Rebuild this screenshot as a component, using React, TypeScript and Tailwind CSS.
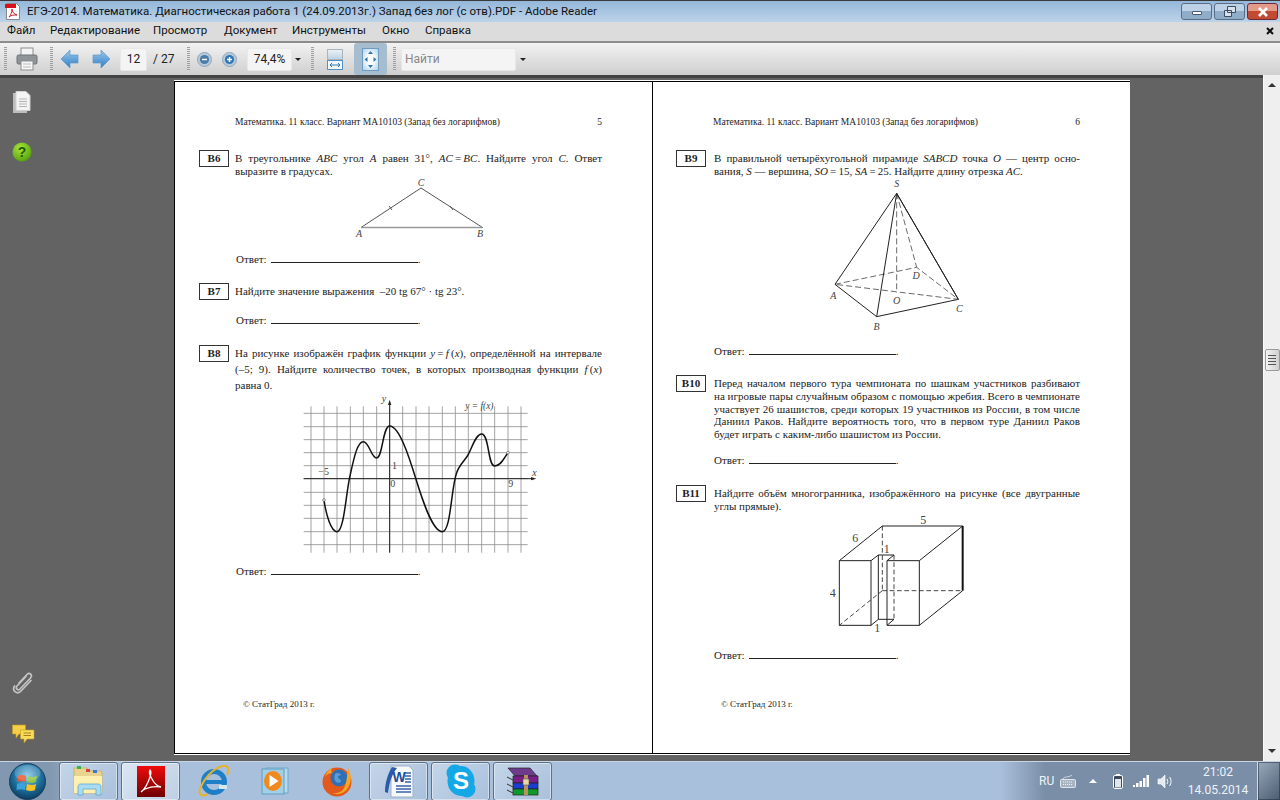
import { ReactNode } from 'react'

const title = 'ЕГЭ-2014. Математика. Диагностическая работа 1 (24.09.2013г.) Запад без лог (с отв).PDF - Adobe Reader'

const menu = [
  { label: 'Файл', width: 'w-[43px]' },
  { label: 'Редактирование', width: 'w-[103px]' },
  { label: 'Просмотр', width: 'w-[71px]' },
  { label: 'Документ', width: 'w-[68px]' },
  { label: 'Инструменты', width: 'w-[90px]' },
  { label: 'Окно', width: 'w-[43px]' },
  { label: 'Справка', width: 'w-[60px]' },
]

function Gripper({ className = '' }: { className?: string }) {
  return (
    <div
      className={`h-[24px] w-[3px] shrink-0 bg-[repeating-linear-gradient(to_bottom,#a0a0a0_0,#a0a0a0_1px,transparent_1px,transparent_2px)] ${className}`}
    />
  )
}

function PdfIcon() {
  return (
    <svg width="16" height="17" viewBox="0 0 16 17" className="shrink-0">
      <path d="M1.5 .5h10l3 3v13h-13z" fill="#fff" stroke="#8a8a8a" />
      <rect x="0" y="1" width="11" height="4" fill="#d8111a" />
      <path d="M4 14c2-2 3-5 3-8 0 3 2 5 5 6-3 0-6 0-8 2z" fill="none" stroke="#c8202a" strokeWidth="1" />
    </svg>
  )
}

function Printer() {
  return (
    <svg width="22" height="24" viewBox="0 0 22 24" className="ml-[9px] shrink-0">
      <rect x="5" y="1" width="12" height="8" fill="#f4f4f4" stroke="#8d8d8d" />
      <rect x="1" y="8" width="20" height="9" rx="1.5" fill="#8f9499" stroke="#6e7276" />
      <rect x="5" y="14" width="12" height="9" fill="#f8f8f8" stroke="#8d8d8d" />
      <path d="M7 17h8M7 20h8" stroke="#b8b8b8" />
    </svg>
  )
}

function ArrowIcon({ dir, className }: { dir: 'left' | 'right'; className: string }) {
  const d = dir === 'left' ? 'M1 10 10 1v5h8v8h-8v5z' : 'M18 10 9 1v5H1v8h8v5z'
  return (
    <svg width="19" height="20" viewBox="0 0 19 20" className={`shrink-0 ${className}`}>
      <defs>
        <linearGradient id={`arrow-${dir}`} x1="0" y1="0" x2="0" y2="1">
          <stop offset="0" stopColor="#9cc8ee" />
          <stop offset="1" stopColor="#2f7fc4" />
        </linearGradient>
      </defs>
      <path d={d} fill={`url(#arrow-${dir})`} stroke="#5d9ac9" strokeWidth=".7" />
    </svg>
  )
}

function ZoomIcon({ plus, className }: { plus?: boolean; className: string }) {
  return (
    <svg width="15" height="15" viewBox="0 0 15 15" className={`shrink-0 ${className}`}>
      <circle cx="7.5" cy="7.5" r="7" fill="#b9c9d9" stroke="#8ea6bc" />
      <circle cx="7.5" cy="7.5" r="4.6" fill={plus ? '#2f78b8' : '#4a7ca8'} />
      <path d={plus ? 'M5 7.5h5M7.5 5v5' : 'M5 7.5h5'} stroke="#fff" strokeWidth="1.5" />
    </svg>
  )
}

function DropArrow({ className }: { className: string }) {
  return <div className={`h-0 w-0 shrink-0 border-x-[3px] border-t-[3px] border-x-transparent border-t-[#222] ${className}`} />
}

function FieldBox({ className, children }: { className: string; children: ReactNode }) {
  return (
    <div className={`flex h-[23px] shrink-0 items-center rounded-[2px] border border-[#e8e8e8] bg-[#f4f4f4] ${className}`}>
      {children}
    </div>
  )
}

function FitWidthIcon() {
  return (
    <svg width="16" height="21" viewBox="0 0 16 21" className="ml-[13px] shrink-0">
      <defs>
        <linearGradient id="fit-width" x1="0" y1="0" x2="0" y2="1">
          <stop offset="0" stopColor="#eef1f4" />
          <stop offset="1" stopColor="#bcd2e4" />
        </linearGradient>
      </defs>
      <rect x=".5" y=".5" width="15" height="10" fill="url(#fit-width)" stroke="#a8b4be" />
      <rect x=".5" y="11.5" width="15" height="9" fill="#f4f9fd" stroke="#4f93c8" />
      <path d="M3 16h10M3 16l2-2M3 16l2 2M13 16l-2-2M13 16l-2 2" stroke="#2f78b0" fill="none" />
    </svg>
  )
}

function FitPageIcon() {
  return (
    <svg width="17" height="23" viewBox="0 0 17 23">
      <defs>
        <radialGradient id="fit-page" cx=".5" cy=".5" r=".7">
          <stop offset=".3" stopColor="#ffffff" />
          <stop offset="1" stopColor="#a5d0ee" />
        </radialGradient>
      </defs>
      <rect x=".5" y=".5" width="16" height="22" fill="url(#fit-page)" stroke="#6f9cc0" />
      <path d="M8.500 3 6 6h5zM8.500 20 6 17h5zM2.500 11.500 5.500 9v5zM14.500 11.500 11.500 9v5z" fill="#2f78b0" />
    </svg>
  )
}

function DocRailIcon() {
  return (
    <svg width="18" height="22" viewBox="0 0 18 22">
      <rect x="0" y="2" width="14" height="20" fill="#bdbdbd" />
      <path d="M3 .5h10l4 4v15H3z" fill="#f4f4f4" stroke="#d0d0d0" />
      <path d="M6 8h8M6 10.500h8M6 13h8M6 15.500h8" stroke="#b4b4b4" />
    </svg>
  )
}

function HelpRailIcon() {
  return (
    <svg width="20" height="20" viewBox="0 0 20 20">
      <defs>
        <radialGradient id="help-green" cx=".4" cy=".3" r=".8">
          <stop offset="0" stopColor="#a8e63a" />
          <stop offset="1" stopColor="#4c9a08" />
        </radialGradient>
      </defs>
      <circle cx="10" cy="10" r="9.500" fill="url(#help-green)" />
      <text x="10" y="15" textAnchor="middle" fontSize="14" fontWeight="700" fontFamily="Liberation Sans, sans-serif" fill="#1f5a08">
        ?
      </text>
    </svg>
  )
}

function ClipRailIcon() {
  return (
    <svg width="22" height="24" viewBox="0 0 22 24">
      <path
        d="M7 12 15 3.500c2.500-2.500 6 .5 3.500 3.500L8 18c-2 2-5-.5-3-3l9-9.500M2.500 15c-3 5 3 9 6.500 5L19 9.500"
        fill="none"
        stroke="#c4c4c4"
        strokeWidth="1.700"
        strokeLinecap="round"
      />
    </svg>
  )
}

function ChatRailIcon() {
  return (
    <svg width="24" height="20" viewBox="0 0 24 20">
      <path d="M1.500 1h13v9H8l-3 4v-4H1.500z" fill="#f5cf45" stroke="#c79a1c" strokeWidth=".6" />
      <path d="M9.500 6h13.500v9h-7l-3 4v-4H9.500z" fill="#f8dc5e" stroke="#c79a1c" strokeWidth=".6" />
      <path d="M12.500 9h7.500M12.500 11.500h7.500" stroke="#a87c12" />
    </svg>
  )
}

function WinButton({ className, children }: { className: string; children: ReactNode }) {
  return (
    <div className={`flex h-[17px] w-[31px] items-center justify-center rounded-[3px] border border-[#5b6d84] ${className}`}>
      {children}
    </div>
  )
}

/* ---- document page ---- */

function Row({ className = '', children }: { className?: string; children: ReactNode }) {
  return <p className={`whitespace-nowrap text-justify [text-align-last:justify] ${className}`}>{children}</p>
}

function Plain({ className = '', children }: { className?: string; children: ReactNode }) {
  return <p className={`whitespace-nowrap ${className}`}>{children}</p>
}

function M({ children }: { children: ReactNode }) {
  return <i>{children}</i>
}

function Task({ label, gap, children }: { label: string; gap: string; children: ReactNode }) {
  return (
    <div className={`flex items-start ${gap}`}>
      <div className="-mt-[2px] flex h-[17px] w-[30px] shrink-0 items-center justify-center border border-[#333] text-[11px] font-bold leading-none">
        {label}
      </div>
      <div className="min-w-0 flex-1 pr-[50px]">{children}</div>
    </div>
  )
}

function Answer({ className }: { className: string }) {
  return (
    <div className={`flex h-[13px] items-baseline ${className}`}>
      <span>Ответ:</span>
      <span className="ml-[4px] h-[9px] w-[147px] border-b border-[#222]" />
      <span>.</span>
    </div>
  )
}

function PageHead({ page, left }: { page: string; left: string }) {
  return (
    <div className={`flex h-[13px] justify-between pr-[50px] text-[9.5px] ${left}`}>
      <span>Математика. 11 класс. Вариант МА10103 (Запад без логарифмов)</span>
      <span>{page}</span>
    </div>
  )
}

function TriangleFigure() {
  return (
    <svg width="140" height="75" viewBox="350 178 140 75" className="ml-[152px] block">
      <path d="M360 227.500 420 188l61.500 39.500z" fill="none" stroke="#555" strokeWidth="1" />
      <path d="M360 227.500h121" stroke="#999" strokeWidth="1.300" />
      <path d="M388 206l3 4M449 206l3 4" stroke="#555" />
      <g fontFamily="Liberation Serif, serif" fontStyle="italic" fontSize="10" fill="#444" textAnchor="middle">
        <text x="420" y="186">C</text>
        <text x="358" y="237">A</text>
        <text x="479" y="237">B</text>
      </g>
    </svg>
  )
}

const gridX = [60, 99, 138, 178, 217, 257, 296, 335, 375, 414, 454, 493, 532, 572, 611, 651, 690]
const gridY = [217, 257, 296, 335, 374, 413, 454, 493, 532, 572, 611]

function GraphFigure() {
  return (
    <svg width="260" height="162" viewBox="0 159 780 486" className="ml-[92px] mt-[2px] block">
      {gridX.map((x) => (
        <path key={x} d={`M${x} 196V635`} stroke="#8c8c8c" strokeWidth="2.400" />
      ))}
      {gridY.map((y) => (
        <path key={y} d={`M38 ${y}H710`} stroke="#8c8c8c" strokeWidth="2.400" />
      ))}
      <path d="M38 413H728M296 635V185" stroke="#222" strokeWidth="3" />
      <path d="M736 413l-16-5v10zM296 176l-5 16h10z" fill="#222" />
      <path
        d="M99 477C105 520 120 572 138 572C160 572 165 450 178 400C190 345 200 302 217 302C235 302 240 351 257 351C275 351 275 255 296 255C325 255 355 350 375 415C395 480 425 572 454 572C480 572 480 440 497 395C505 370 525 355 532 340C545 315 555 279 572 279C595 279 590 375 611 375C630 375 640 350 651 335"
        fill="none"
        stroke="#111"
        strokeWidth="4.500"
      />
      <circle cx="99" cy="477" r="4" fill="#fff" stroke="#555" strokeWidth="2" />
      <circle cx="651" cy="335" r="4" fill="#fff" stroke="#555" strokeWidth="2" />
      <g fontFamily="Liberation Serif, serif" fontSize="30" fill="#444">
        <text x="272" y="182" fontStyle="italic">y</text>
        <text x="523" y="204" fontStyle="italic" fontSize="28">y = f(x)</text>
        <text x="724" y="404" fontStyle="italic">x</text>
        <text x="82" y="403">−5</text>
        <text x="303" y="384">1</text>
        <text x="298" y="438">0</text>
        <text x="652" y="438">9</text>
      </g>
    </svg>
  )
}

function PyramidFigure() {
  return (
    <svg width="150" height="160" viewBox="450 114 450 480" className="ml-[144px] block">
      <path d="M680 160 495 433l125 97 245-52zM680 160l-60 370M680 160l185 318" fill="none" stroke="#222" strokeWidth="3" />
      <path d="M495 433 740 382 865 478 495 433M680 160V458M680 160l60 222" fill="none" stroke="#333" strokeWidth="2.200" strokeDasharray="18 9" />
      <g fontFamily="Liberation Serif, serif" fontStyle="italic" fontSize="30" fill="#444" textAnchor="middle">
        <text x="680" y="140">S</text>
        <text x="490" y="476">A</text>
        <text x="620" y="570">B</text>
        <text x="868" y="516">C</text>
        <text x="738" y="416">D</text>
        <text x="680" y="491">O</text>
      </g>
    </svg>
  )
}

function PolyhedronFigure() {
  return (
    <svg width="140" height="125" viewBox="480 429 420 375" className="ml-[154px] block">
      <g fill="none" stroke="#222" strokeWidth="3">
        <path d="M603 572H508V766H603V572L625 555V748L603 766" />
        <path d="M625 555H672L651 572V766H748V572H651M748 572 878 468H637L508 572M748 766 878 662" />
        <path d="M625 748H672L651 766" />
      </g>
      <path d="M878 468V662" stroke="#111" strokeWidth="6" />
      <path d="M637 468V662M637 662H878M637 662 508 766M672 555V748" fill="none" stroke="#222" strokeWidth="2.500" strokeDasharray="14 8" />
      <g fontFamily="Liberation Serif, serif" fontSize="36" fill="#444" textAnchor="middle">
        <text x="760" y="462">5</text>
        <text x="556" y="516">6</text>
        <text x="650" y="548">1</text>
        <text x="488" y="682">4</text>
        <text x="622" y="786">1</text>
      </g>
    </svg>
  )
}

/* ---- taskbar icons ---- */

function StartOrb() {
  return (
    <svg width="37" height="37" viewBox="0 0 37 37">
      <defs>
        <radialGradient id="orb" cx=".5" cy=".35" r=".7">
          <stop offset="0" stopColor="#7fc5e8" />
          <stop offset=".55" stopColor="#1c6f9f" />
          <stop offset="1" stopColor="#0a3352" />
        </radialGradient>
      </defs>
      <circle cx="18.500" cy="18.500" r="18" fill="url(#orb)" stroke="#1c3f5c" />
      <path d="M9 13c3-1.500 6-1 8 0v6c-2-1-5-1.500-9 0z" fill="#e8552b" />
      <path d="M19 13c2 1 5 1.500 9 0l-1 6c-3 1.500-6 1-9 0z" fill="#8cc63f" />
      <path d="M8 21c3-1.500 6-1 8.500 0l-.5 6c-3-1-5-1-8.500 0z" fill="#39a3dc" />
      <path d="M18 21c3 1 6 1.500 9 0l-1 6c-3 1.500-6 1-9 0z" fill="#f7c325" />
      <ellipse cx="18.500" cy="10" rx="13" ry="8" fill="#fff" opacity=".18" />
    </svg>
  )
}

function FolderIcon() {
  return (
    <svg width="32" height="32" viewBox="0 0 32 32">
      <path d="M1 3h13l2 3h13v22H1z" fill="#e8d48e" stroke="#c8b56e" />
      <rect x="4" y="1" width="4" height="3" fill="#36b34a" />
      <rect x="13" y="4" width="4" height="3" fill="#d8403a" />
      <rect x="20" y="5" width="4" height="3" fill="#3a78d8" />
      <path d="M1 11h28v17H1z" fill="#fdf0b0" />
      <path d="M5 30v-8c0-2 1-3 3-3h17c2 0 3 1 3 3v8h-5v-6H10v6z" fill="#a9dcf2" stroke="#5fa6cf" strokeWidth=".8" />
    </svg>
  )
}

function AdobeIcon() {
  return (
    <svg width="28" height="31" viewBox="0 0 28 31">
      <defs>
        <linearGradient id="adobe" x1="0" y1="0" x2="0" y2="1">
          <stop offset="0" stopColor="#f00a0a" />
          <stop offset="1" stopColor="#6e0000" />
        </linearGradient>
      </defs>
      <rect width="28" height="31" fill="url(#adobe)" />
      <path d="M4 26c4-3 7-9 9-15 1-3 1-6 0-7-1 2 0 6 2 9 2 4 5 7 9 8-5-1-11 0-16 2-2 1-3 2-4 3z" fill="none" stroke="#fff" strokeWidth="1.300" />
    </svg>
  )
}

function IeIcon() {
  return (
    <svg width="32" height="34" viewBox="0 0 32 34">
      <circle cx="17" cy="18" r="10.500" fill="none" stroke="#1c7fc8" strokeWidth="5" />
      <path d="M7 18h20" stroke="#1c7fc8" strokeWidth="4" />
      <path d="M22 21h8v4h-8z" fill="#d4e8f4" />
      <path d="M29 2c-8-1-20 8-26 23-2 6 2 8 8 5M29 2c2 1 3 4 1 9" fill="none" stroke="#e6b32a" strokeWidth="2" />
    </svg>
  )
}

function PlayerIcon() {
  return (
    <svg width="28" height="28" viewBox="0 0 28 28">
      <rect x="5" y="1" width="22" height="25" fill="#b7d9ec" stroke="#6fa8c8" />
      <rect x="1" y="2" width="22" height="25" fill="#a3cfe6" stroke="#5f9fc4" />
      <ellipse cx="12" cy="14" rx="9" ry="10" fill="#f08a1e" />
      <path d="M8.500 8v12l9-6z" fill="#fff" />
    </svg>
  )
}

function FirefoxIcon() {
  return (
    <svg width="30" height="32" viewBox="0 0 30 32">
      <circle cx="15" cy="17" r="14.500" fill="#e2591c" />
      <circle cx="17" cy="13" r="8.500" fill="#2f6fb5" />
      <path d="M13 9c2-2 5-1 6 1-1 1-3 0-3 2s3 2 3 4-3 2-5 1c-2-2-2-5-1-8z" fill="#5d9ad8" />
      <path d="M26 3c3 5 4 12 1 18-3 7-11 10-17 7 5 1 11-1 13-7 2-5 2-11 3-18z" fill="#f5a623" />
      <path d="M3 12c1-4 3-7 7-9-1 2-1 4 0 5-3 0-5 1-7 4z" fill="#f5a623" />
    </svg>
  )
}

function WordIcon() {
  return (
    <svg width="30" height="33" viewBox="0 0 30 33">
      <path d="M7 1h18l4 4v27H7z" fill="#f6f8fb" stroke="#9eb3c9" />
      <path d="M21 8h6M21 11h6M21 14h6M21 17h6M12 21h15M12 24h15M12 27h15" stroke="#3a62a8" strokeWidth="1.500" />
      <path d="M8 2C4 8 1 18 1 27l3 1C5 18 8 9 13 3z" fill="#2b5ba8" />
      <text x="15" y="17" textAnchor="middle" fontSize="14" fontWeight="700" fontFamily="Liberation Sans, sans-serif" fill="#1f4c96">
        W
      </text>
    </svg>
  )
}

function SkypeIcon() {
  return (
    <svg width="30" height="34" viewBox="0 0 30 34">
      <circle cx="9" cy="9" r="8.500" fill="#14a8e6" />
      <circle cx="21" cy="25" r="8.500" fill="#14a8e6" />
      <ellipse cx="15" cy="17" rx="13.500" ry="15" fill="#14a8e6" />
      <text x="15" y="25" textAnchor="middle" fontSize="24" fontWeight="700" fontFamily="Liberation Sans, sans-serif" fill="#fff">
        S
      </text>
    </svg>
  )
}

function RarIcon() {
  return (
    <svg width="32" height="30" viewBox="0 0 32 30">
      <path d="M1 2h22l7 8H8z" fill="#6e3b8c" stroke="#222" strokeWidth=".7" />
      <rect x="6" y="10" width="25" height="7" fill="#7a1f8a" stroke="#222" strokeWidth=".7" />
      <rect x="6" y="17" width="25" height="6" fill="#1a3fd0" stroke="#222" strokeWidth=".7" />
      <rect x="6" y="23" width="25" height="6" fill="#0d9a2a" stroke="#222" strokeWidth=".7" />
      <path d="M0 11l6 3M0 18l6 3M0 24l6 3" stroke="#333" />
      <rect x="17" y="9" width="4" height="20" fill="#b8935a" />
      <rect x="16" y="13" width="6" height="6" fill="#e8d8a8" stroke="#555" strokeWidth=".6" />
    </svg>
  )
}

function TaskButton({ active, children }: { active?: boolean; children: ReactNode }) {
  return (
    <div
      className={`flex h-[39px] w-[59px] shrink-0 items-center justify-center rounded-[3px] border border-[#5f7186] shadow-[inset_0_0_0_1px_rgba(255,255,255,0.45)] ${
        active ? 'bg-[linear-gradient(135deg,#dbe6f2,#bccfe4)]' : 'bg-[linear-gradient(135deg,#c4d5e8,#a9c0dc)]'
      }`}
    >
      {children}
    </div>
  )
}

function TaskSlot({ children }: { children: ReactNode }) {
  return <div className="flex h-[39px] w-[59px] shrink-0 items-center justify-center">{children}</div>
}

export default function App() {
  return (
    <div className="flex h-screen w-[1280px] flex-col overflow-hidden bg-[#636363] font-['Roboto',sans-serif]">
      {/* title bar */}
      <div className="flex h-[22px] shrink-0 items-center border-t border-[#3a3a3a] bg-[linear-gradient(to_bottom,#95b7da,#bcd3e8)] pl-[5px] pr-[2px]">
        <PdfIcon />
        <span className="ml-[6px] whitespace-nowrap text-[11.5px] leading-none text-[#111]">{title}</span>
        <div className="ml-auto flex gap-[2px]">
          <WinButton className="bg-[linear-gradient(to_bottom,#bdd2e6_50%,#8fadc9_50%)]">
            <div className="mt-[3px] h-[4px] w-[10px] rounded-[1px] border border-[#4a5a6c] bg-white" />
          </WinButton>
          <WinButton className="bg-[linear-gradient(to_bottom,#bdd2e6_50%,#8fadc9_50%)]">
            <svg width="12" height="11" viewBox="0 0 12 11">
              <path d="M3.500.5h8v6h-8zM.5 4.500h7v6h-7z" fill="#d8e2ec" stroke="#3d4c5c" />
            </svg>
          </WinButton>
          <WinButton className="border-[#6b2a36] bg-[linear-gradient(to_bottom,#e39a88_50%,#c04a32_50%)]">
            <svg width="12" height="10" viewBox="0 0 12 10">
              <path d="M2 1l8 8M10 1 2 9" stroke="#fff" strokeWidth="2.600" />
            </svg>
          </WinButton>
        </div>
      </div>

      {/* menu */}
      <div className="flex h-[19px] shrink-0 items-center bg-[#dcdcdc] pb-[2px] pl-[7px] pr-[6px] text-[11.5px] leading-none text-[#111]">
        {menu.map((item) => (
          <span key={item.label} className={item.width}>
            {item.label}
          </span>
        ))}
        <svg width="8" height="8" viewBox="0 0 8 8" className="ml-auto">
          <path d="M1 1l6 6M7 1 1 7" stroke="#111" strokeWidth="2" />
        </svg>
      </div>

      {/* toolbar */}
      <div className="flex h-[34px] shrink-0 items-center border-t-2 border-[#8c8c8c] bg-[linear-gradient(to_bottom,#f2f2f2,#cfcfcf)] pl-[4px] text-[12px] text-[#222]">
        <Gripper />
        <Printer />
        <Gripper className="ml-[12px]" />
        <ArrowIcon dir="left" className="ml-[7px]" />
        <ArrowIcon dir="right" className="ml-[13px]" />
        <FieldBox className="ml-[9px] w-[27px] justify-center">12</FieldBox>
        <span className="ml-[6px] w-[23px] whitespace-nowrap">/ 27</span>
        <Gripper className="ml-[11px]" />
        <ZoomIcon className="ml-[7px]" />
        <ZoomIcon plus className="ml-[10px]" />
        <FieldBox className="ml-[10px] w-[45px] justify-center">74,4%</FieldBox>
        <DropArrow className="ml-[3px]" />
        <Gripper className="ml-[10px]" />
        <FitWidthIcon />
        <div className="ml-[11px] flex h-[32px] w-[33px] shrink-0 items-center justify-center rounded-[3px] bg-[#a6bdd0]">
          <FitPageIcon />
        </div>
        <Gripper className="ml-[6px]" />
        <FieldBox className="ml-[5px] w-[115px] pl-[3px] text-[#8a8a8a]">Найти</FieldBox>
        <DropArrow className="ml-[4px]" />
      </div>

      {/* workspace */}
      <div className="flex min-h-0 flex-1 bg-[#636363] shadow-[inset_0_3px_0_#444]">
        <div className="flex w-[174px] shrink-0 flex-col justify-between pb-[17px] pl-[12px] pt-[16px]">
          <div className="flex flex-col gap-[29px]">
            <div className="ml-[1px]">
              <DocRailIcon />
            </div>
            <HelpRailIcon />
          </div>
          <div className="flex flex-col gap-[29px]">
            <ClipRailIcon />
            <div className="-ml-[1px]">
              <ChatRailIcon />
            </div>
          </div>
        </div>

        {/* pages */}
        <div className="mb-[7px] mt-[6px] flex w-[956px] shrink-0 border-y border-l border-black bg-white font-['Liberation_Serif',serif] text-[11px] leading-[13px] text-[#1c1c1c] shadow-[0_-1px_0_#fff,0_1px_0_#fff]">
          <div className="w-[478px] shrink-0 border-r border-black pl-[24px] pt-[34px]">
            <PageHead left="pl-[36px]" page="5" />
            <div className="mt-[23px]">
              <Task label="В6" gap="gap-[6px]">
                <Row>
                  В треугольнике <M>ABC</M> угол <M>A</M> равен 31°, <M>AC</M>{'\u2009=\u2009'}<M>BC</M>. Найдите угол <M>C</M>. Ответ
                </Row>
                <Plain>выразите в градусах.</Plain>
              </Task>
            </div>
            <TriangleFigure />
            <Answer className="ml-[37px]" />
            <div className="mt-[19px]">
              <Task label="В7" gap="gap-[6px]">
                <Plain>Найдите значение выражения &nbsp;–20 tg 67° · tg 23°.</Plain>
              </Task>
            </div>
            <Answer className="ml-[37px] mt-[14px]" />
            <div className="mt-[20px]">
              <Task label="В8" gap="gap-[6px]">
                <Row>
                  На рисунке изображён график функции <M>y</M>{'\u2009=\u2009'}<M>f</M>{'\u2009'}(<M>x</M>), определённой на интервале
                </Row>
                <Row className="mt-[3px]">
                  (–5; 9). Найдите количество точек, в которых производная функции <M>f</M>{'\u2009'}(<M>x</M>)
                </Row>
                <Plain className="mt-[3px]">равна 0.</Plain>
              </Task>
            </div>
            <GraphFigure />
            <Answer className="ml-[37px] mt-[9px]" />
            <p className="ml-[44px] mt-[120px] text-[9px]">© СтатГрад 2013 г.</p>
          </div>

          <div className="w-[477px] shrink-0 pl-[23px] pt-[34px]">
            <PageHead left="pl-[37px]" page="6" />
            <div className="mt-[23px]">
              <Task label="В9" gap="gap-[8px]">
                <Row>
                  В правильной четырёхугольной пирамиде <M>SABCD</M> точка <M>O</M> — центр осно-
                </Row>
                <Plain>
                  вания, <M>S</M> — вершина, <M>SO</M>{'\u2009=\u2009'}15, <M>SA</M>{'\u2009=\u2009'}25. Найдите длину отрезка <M>AC</M>.
                </Plain>
              </Task>
            </div>
            <PyramidFigure />
            <Answer className="ml-[38px] mt-[7px]" />
            <div className="mt-[19px]">
              <Task label="В10" gap="gap-[8px]">
                <Row className="leading-[12.75px]">Перед началом первого тура чемпионата по шашкам участников разбивают</Row>
                <Row className="leading-[12.75px]">на игровые пары случайным образом с помощью жребия. Всего в чемпионате</Row>
                <Row className="leading-[12.75px]">участвует 26 шашистов, среди которых 19 участников из России, в том числе</Row>
                <Row className="leading-[12.75px]">Даниил Раков. Найдите вероятность того, что в первом туре Даниил Раков</Row>
                <Plain className="leading-[12.75px]">будет играть с каким-либо шашистом из России.</Plain>
              </Task>
            </div>
            <Answer className="ml-[38px] mt-[13px]" />
            <div className="mt-[20px]">
              <Task label="В11" gap="gap-[8px]">
                <Row>Найдите объём многогранника, изображённого на рисунке (все двугранные</Row>
                <Plain>углы прямые).</Plain>
              </Task>
            </div>
            <PolyhedronFigure />
            <Answer className="ml-[38px] mt-[11px]" />
            <p className="ml-[45px] mt-[36px] text-[9px]">© СтатГрад 2013 г.</p>
          </div>
        </div>

        <div className="flex-1" />

        {/* scrollbar */}
        <div className="flex w-[17px] shrink-0 flex-col items-center border-l border-[#fafafa] bg-[#efefef] pb-[8px] pt-[8px]">
          <div className="h-0 w-0 border-x-[4px] border-b-[4px] border-x-transparent border-b-[#333]" />
          <div className="mt-[262px] flex h-[22px] w-[15px] flex-col items-center justify-center gap-[2px] rounded-[2px] border border-[#9a9a9a] bg-[linear-gradient(to_right,#f4f4f4,#cfcfcf)]">
            <div className="h-px w-[8px] bg-[#555]" />
            <div className="h-px w-[8px] bg-[#555]" />
            <div className="h-px w-[8px] bg-[#555]" />
            <div className="h-px w-[8px] bg-[#555]" />
          </div>
          <div className="mt-auto h-0 w-0 border-x-[4px] border-t-[4px] border-x-transparent border-t-[#333]" />
        </div>
      </div>

      {/* taskbar */}
      <div className="flex h-[39px] shrink-0 items-center border-t border-[#c7d5e5] bg-[linear-gradient(to_right,#8298b0_0,#8298b0_50px,#a9c0dc_100px,#a9c0dc_1000px,#7b8ea8_1045px,#7b8ea8_100%)]">
        <div className="flex w-[59px] shrink-0 items-center justify-center pr-[4px]">
          <StartOrb />
        </div>
        <div className="flex gap-[3px]">
          <TaskButton>
            <FolderIcon />
          </TaskButton>
          <TaskButton active>
            <AdobeIcon />
          </TaskButton>
          <TaskSlot>
            <IeIcon />
          </TaskSlot>
          <TaskSlot>
            <PlayerIcon />
          </TaskSlot>
          <TaskSlot>
            <FirefoxIcon />
          </TaskSlot>
          <TaskButton>
            <WordIcon />
          </TaskButton>
          <TaskButton>
            <SkypeIcon />
          </TaskButton>
          <TaskButton>
            <RarIcon />
          </TaskButton>
        </div>

        {/* tray */}
        <div className="ml-auto flex h-full items-center text-[#eef3f8]">
          <span className="w-[14px] whitespace-nowrap text-[12px] leading-none">RU</span>
          <svg width="16" height="14" viewBox="0 0 16 14" className="ml-[7px]">
            <path d="M3 5c1-3 5-1 9-4" fill="none" stroke="#d0d8e0" />
            <rect x=".5" y="5.500" width="15" height="8" rx="1" fill="#a8b4c2" stroke="#e0e6ec" />
            <path d="M3 8h10M3 10.500h10" stroke="#eef2f6" strokeDasharray="1 1" />
          </svg>
          <div className="ml-[13px] h-0 w-0 border-x-[4px] border-b-[4px] border-x-transparent border-b-white" />
          <svg width="10" height="15" viewBox="0 0 10 15" className="ml-[16px]">
            <rect x=".5" y="1.500" width="9" height="13" rx="1.500" fill="#3c4a5a" stroke="#fff" />
            <rect x="3" y="0" width="4" height="1.500" fill="#fff" />
            <rect x="2" y="5" width="6" height="8.500" fill="#dfe6ee" />
          </svg>
          <svg width="16" height="12" viewBox="0 0 16 12" className="ml-[10px]" fill="#fff">
            <rect x="0" y="10" width="2" height="2" />
            <rect x="3" y="8" width="2.500" height="4" />
            <rect x="6.500" y="6" width="2.500" height="6" />
            <rect x="10" y="3" width="2.500" height="9" />
            <rect x="13.500" y="0" width="2.500" height="12" />
          </svg>
          <svg width="16" height="15" viewBox="0 0 16 15" className="ml-[8px]">
            <path d="M1 5h3l4-4v13l-4-4H1z" fill="#e6ebf0" stroke="#fff" strokeWidth=".6" />
            <path d="M10 5c1 1.500 1 3.500 0 5M12.500 3c2 2.500 2 6.500 0 9" fill="none" stroke="#fff" />
          </svg>
          <div className="ml-[10px] flex w-[70px] flex-col items-center text-[12px] leading-[18px]">
            <span>21:02</span>
            <span className="whitespace-nowrap">14.05.2014</span>
          </div>
          <div className="ml-[4px] h-full w-[23px] border-l border-[#d0dbe6] bg-[linear-gradient(135deg,#9aaabd,#4c5c70)] shadow-[inset_0_0_0_1px_rgba(30,40,55,0.5)]" />
        </div>
      </div>
    </div>
  )
}
